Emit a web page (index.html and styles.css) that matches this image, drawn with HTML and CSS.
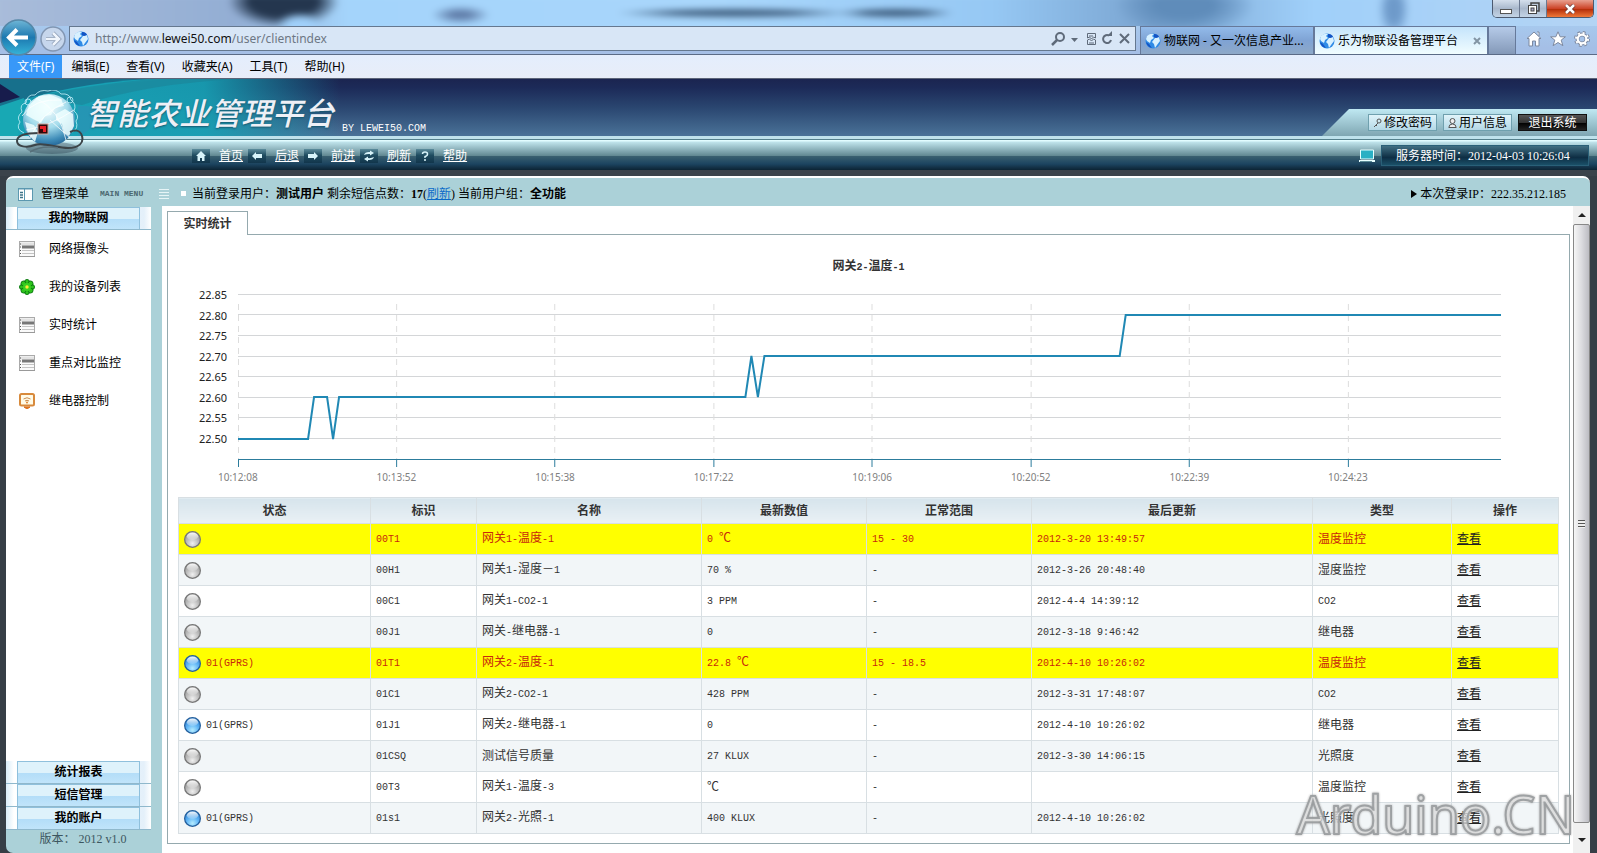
FILE: index.html
```html
<!DOCTYPE html>
<html lang="zh-CN">
<head>
<meta charset="utf-8">
<title>乐为物联设备管理平台</title>
<link rel="stylesheet" href="styles.css">
</head>
<body>
<svg class="defs" width="0" height="0" aria-hidden="true">
  <defs>
    <radialGradient id="gGray" cx="50%" cy="75%" r="75%"><stop offset="0" stop-color="#f0f0f0"/><stop offset=".5" stop-color="#bdbdbd"/><stop offset="1" stop-color="#8f8f8f"/></radialGradient>
    <radialGradient id="gBlue" cx="50%" cy="80%" r="75%"><stop offset="0" stop-color="#b4ecff"/><stop offset=".5" stop-color="#62b6f6"/><stop offset="1" stop-color="#2b7fd0"/></radialGradient>
    <linearGradient id="gShine" x1="0" y1="0" x2="0" y2="1"><stop offset="0" stop-color="#fff" stop-opacity=".95"/><stop offset="1" stop-color="#fff" stop-opacity=".15"/></linearGradient>
    <linearGradient id="gBack" x1="0" y1="0" x2="0" y2="1"><stop offset="0" stop-color="#6fb6d6"/><stop offset=".5" stop-color="#1c78b0"/><stop offset="1" stop-color="#36b4d8"/></linearGradient>
    <linearGradient id="gNav" x1="0" y1="0" x2="0" y2="1"><stop offset="0" stop-color="#5c8c9c"/><stop offset=".45" stop-color="#1f4c60"/><stop offset="1" stop-color="#12364c"/></linearGradient>
    <radialGradient id="gGlobe" cx="45%" cy="25%" r="80%"><stop offset="0" stop-color="#fff"/><stop offset=".5" stop-color="#a4dcec"/><stop offset=".8" stop-color="#3f8cb8"/><stop offset="1" stop-color="#1c5c90"/></radialGradient>
  </defs>
  <symbol id="earth" viewBox="0 0 16 16"><circle cx="8" cy="8" r="7.5" fill="#2f8be6"/><path d="M2 3Q5 0 9 1L7 3 9 5 6 7 5 10 2 8 1 6zM10 5l4-1 1 4-3 4-2 3-1-4-2-2z" fill="#d8f1ff"/><path d="M9 1q4 0 5 3l-3 1-2-1zM1 9l3 2 3 4q-5-1-6-6z" fill="#1454c4"/></symbol>
  <symbol id="orb-gray" viewBox="0 0 16 16"><circle cx="8" cy="8" r="7.4" fill="url(#gGray)" stroke="#777" stroke-width="1.2"/><ellipse cx="8" cy="5" rx="5.3" ry="3.5" fill="url(#gShine)"/></symbol>
  <symbol id="orb-blue" viewBox="0 0 16 16"><circle cx="8" cy="8" r="7.4" fill="url(#gBlue)" stroke="#245f9c" stroke-width="1.2"/><ellipse cx="8" cy="5" rx="5.3" ry="3.5" fill="url(#gShine)"/></symbol>
  <symbol id="list" viewBox="0 0 16 16"><rect x=".5" y=".5" width="15" height="15" fill="#fafafa" stroke="#aaa"/><path d="M1 3h14" stroke="#e2e2e2" stroke-width="3"/><path d="M3 6h12" stroke="#777" stroke-width="3"/><path d="M3 9.500h12M3 12.500h12" stroke="#c4c4c4"/><path d="M1 3h1M1 6h1M1 9.500h1M1 12.500h1" stroke="#555"/><path d="M0 15.500h16" stroke="#999"/></symbol>
</svg>

<div class="chrome">
  <div class="titlebar">
    <div class="glass"></div>
    <div class="winbtns">
      <button class="wb" aria-label="最小化"><svg width="14" height="12"><rect x="1.500" y="6.500" width="11" height="4" fill="#fff" stroke="#555"/></svg></button>
      <button class="wb" aria-label="还原"><svg width="13" height="13"><path d="M4 3V1h8v8h-2" fill="none" stroke="#444" stroke-width="1.500"/><rect x="1.500" y="3.500" width="8" height="8" fill="#fff" stroke="#444"/><rect x="4" y="6" width="3" height="3" fill="#aac" stroke="#444"/></svg></button>
      <button class="wb close" aria-label="关闭"><svg width="12" height="10"><path d="M2 1l8 8M10 1L2 9" stroke="#633" stroke-width="4"/><path d="M2 1l8 8M10 1L2 9" stroke="#fff" stroke-width="2.500"/></svg></button>
    </div>
  </div>
  <div class="addressrow">
    <button class="back" aria-label="返回"><svg width="37" height="37" viewBox="0 0 37 37"><circle cx="18.500" cy="18.500" r="17.500" fill="url(#gBack)" stroke="#5688a8" stroke-width="1.500"/><path d="M28 18.500H10M17 10.500l-8 8 8 8" fill="none" stroke="#fff" stroke-width="4"/></svg></button>
    <button class="fwd" aria-label="前进"><svg width="26" height="26" viewBox="0 0 26 26"><circle cx="13" cy="13" r="12" fill="#c6d6ec" stroke="#8296b2" stroke-width="1.500"/><path d="M6 13h12M13 7l6 6-6 6" fill="none" stroke="#8b9bb4" stroke-width="4"/><path d="M6 13h12M13 7l6 6-6 6" fill="none" stroke="#f0f5fc" stroke-width="2.500"/></svg></button>
    <div class="address">
      <svg width="16" height="16"><use href="#earth"/></svg>
      <span class="url">http://www.<span>lewei50.com</span>/user/clientindex</span>
      <svg width="80" height="16" viewBox="0 0 80 16" fill="none" stroke="#5f6b7a"><circle cx="9" cy="6" r="4" stroke-width="2"/><path d="M6 9l-5 5" stroke-width="2.500"/><path d="M20 7h7l-3.500 4z" fill="#5f6b7a" stroke="none"/><path d="M36.500 7V2.500h8V7l-2-1-2 2-2-2zM36.500 9v4.500h8V9l-2-1-2 2-2-2zM38 5h4M38 12h5" /><path d="M60 9a4 4 0 1 1-2-4.500" stroke-width="2"/><path d="M56 5h5V0z" fill="#5f6b7a" stroke="none"/><path d="M69 3l9 9M78 3l-9 9" stroke-width="2"/></svg>
    </div>
    <div class="tabs">
      <button class="tab"><svg width="16" height="16"><use href="#earth"/></svg><span>物联网 - 又一次信息产业...</span></button>
      <button class="tab on"><svg width="16" height="16"><use href="#earth"/></svg><span>乐为物联设备管理平台</span><svg class="x" width="8" height="8"><path d="M1 1l6 6M7 1L1 7" stroke="#8295a4" stroke-width="2"/></svg></button>
      <button class="newtab" aria-label="新标签"></button>
    </div>
    <div class="tools">
      <button aria-label="主页"><svg width="16" height="16" viewBox="0 0 16 16"><path d="M8 1l7 6.500h-2V15H9.500v-5h-3v5H3V7.500H1zM11 1h2v4" fill="#fff" stroke="#7d89a0"/></svg></button>
      <button aria-label="收藏"><svg width="16" height="16" viewBox="0 0 16 16"><path d="M8 .8l2.200 5h5.200l-4.200 3.300 1.700 5.600L8 11.500l-4.900 3.200 1.700-5.600L.6 5.800h5.200z" fill="#fff" stroke="#7d89a0"/></svg></button>
      <button aria-label="工具"><svg width="16" height="16" viewBox="0 0 16 16"><circle cx="8" cy="8" r="6.500" fill="none" stroke="#7d89a0" stroke-width="3" stroke-dasharray="2.600 2.500"/><circle cx="8" cy="8" r="4.500" fill="none" stroke="#7d89a0" stroke-width="4"/><circle cx="8" cy="8" r="6" fill="none" stroke="#fff" stroke-width="2" stroke-dasharray="2 2.700"/><circle cx="8" cy="8" r="4.300" fill="none" stroke="#fff" stroke-width="2.200"/></svg></button>
    </div>
  </div>
  <nav class="menubar">
    <button class="sel">文件(F)</button><button>编辑(E)</button><button>查看(V)</button><button>收藏夹(A)</button><button>工具(T)</button><button>帮助(H)</button>
  </nav>
</div>

<header class="banner">
  <svg class="art" width="340" height="57" viewBox="0 0 340 57" aria-hidden="true">
    <defs><linearGradient id="fade" x1="0" x2="1"><stop offset="0" stop-color="#17a3b6"/><stop offset=".6" stop-color="#17a3b6" stop-opacity=".9"/><stop offset="1" stop-color="#17a3b6" stop-opacity="0"/></linearGradient></defs>
    <path d="M0 0h170Q70 8 0 28z" fill="#17708c"/><path d="M0 5l20 13L0 24z" fill="#171c4c"/>
    <path d="M0 28Q70 4 150 0h190v57H0z" fill="url(#fade)"/>
    <path d="M82 26Q150 4 240 0h-90Q60 10 30 20z" fill="#1c8398" opacity=".6"/>
    <path d="M0 27L24 19 18 57H0z" fill="#18a8b4"/><path d="M80 57q40-26 6-30h-8v30z" fill="#2f8fb4" opacity=".6"/>
  </svg>
  <svg class="globe" width="68" height="66" viewBox="0 0 68 66" aria-hidden="true">
    <ellipse cx="36" cy="58" rx="26" ry="6" fill="#123" opacity=".3"/>
    <circle cx="33" cy="30" r="26" fill="url(#gGlobe)"/>
    <path d="M13 15l10-9 12-1 10 4 3 7-9 2-4 7-6 1-4 7-8-4-7-4zM40 24l9-5 8 5 1 12-5 10-5-3-2-9-6-4zM9 32l9 3 4 7-3 10-7-8z" fill="#f0ffff" opacity=".85"/>
    <path d="M6 26Q18 8 46 10M10 40Q34 36 58 20M20 8q24 12 30 42M14 48Q24 24 50 12M34 30l20 18" fill="none" stroke="#fff" stroke-opacity=".75"/>
    <g fill="none" stroke="#c4f0fa" stroke-opacity=".8"><path d="M6 22q-3-8 4-9 1-9 9-8 5-6 13-4 8-3 13 3 9-1 10 6 6 4 3 11"/><path d="M6 22q-6 5-2 10-5 7 4 11M58 21q6 5 2 10 3 8-4 11"/><circle cx="12" cy="12" r="3"/><circle cx="54" cy="10" r="3"/></g>
    <path d="M23 43C12 43 1 45 1 51s10 7 18 4 22 3 33 3 16-5 14-12-8-6-12-4" fill="none" stroke="#3c4448" stroke-width="2"/>
    <path d="M14 62q12-7 28-4" fill="none" stroke="#58707a" stroke-width="1.500"/>
    <rect x="22" y="34" width="10" height="10" fill="#300a0c" stroke="#c9a8a0" stroke-width="1"/><path d="M24 36h6v6h-3v-3h-3z" fill="#e82028"/>
  </svg>
  <div class="brand"><h1>智能农业管理平台</h1><span>BY LEWEI50.COM</span></div>
  <div class="account">
    <button><svg width="9" height="10" viewBox="0 0 9 10" fill="none" stroke="#555"><circle cx="6" cy="3" r="2"/><path d="M5 5L1 9M3 7l1 1"/></svg>修改密码</button>
    <button><svg width="9" height="10" viewBox="0 0 9 10" fill="#eee" stroke="#555"><circle cx="4.500" cy="3" r="2.500"/><path d="M.8 9.500Q1 6 4.500 6t3.700 3.500z"/></svg>用户信息</button>
    <button class="exit">退出系统</button>
  </div>
</header>
<div class="navbar">
  <nav class="links">
    <a href="#"><svg viewBox="0 0 18 14"><rect width="18" height="14" fill="url(#gNav)"/><path d="M9 2l5 5h-1.500v5H10V9H8v3H5.500V7H4z" fill="#d8f4fa"/></svg><span>首页</span></a>
    <a href="#"><svg viewBox="0 0 18 14"><rect width="18" height="14" fill="url(#gNav)"/><path d="M4 7l4-4v2h6v4H8v2z" fill="#d8f4fa"/></svg><span>后退</span></a>
    <a href="#"><svg viewBox="0 0 18 14"><rect width="18" height="14" fill="url(#gNav)"/><path d="M14 7l-4-4v2H4v4h6v2z" fill="#d8f4fa"/></svg><span>前进</span></a>
    <a href="#"><svg viewBox="0 0 18 14"><rect width="18" height="14" fill="url(#gNav)"/><path d="M4 6q1-3.500 6-3V1.500L14 4l-4 2.500V5Q7 4.500 4 6zM14 8q-1 3.500-6 3v1.500L4 10l4-2.500V9q3 .5 6-1z" fill="#d8f4fa"/></svg><span>刷新</span></a>
    <a href="#"><svg viewBox="0 0 18 14"><rect width="18" height="14" fill="url(#gNav)"/><path d="M6.500 5q0-2 2.500-2t2.500 2T9 7.500V9M9 10v2" fill="none" stroke="#d8f4fa" stroke-width="1.500"/></svg><span>帮助</span></a>
  </nav>
  <svg width="16" height="14" viewBox="0 0 16 14"><path d="M1.500 1h13v9h-13z" fill="#2ab0c4" stroke="#e8ffff"/><path d="M0 12h16" stroke="#e8ffff" stroke-width="2"/><path d="M1 12.500h12" stroke="#5c8c98"/></svg>
  <div class="clock">服务器时间：2012-04-03 10:26:04</div>
</div>

<main class="shell">
  <div class="infobar">
    <div class="menuhead">
      <svg width="15" height="13" viewBox="0 0 15 13"><rect x=".5" y=".5" width="14" height="12" fill="#fff" stroke="#5c98b0"/><path d="M0 1h15M6.500 1v12" stroke="#5c98b0"/><path d="M2 4.500h3M2 7h3M2 9.500h3" stroke="#3e7388" stroke-width="1.500"/></svg>
      <span>管理菜单</span><small>MAIN MENU</small>
      <svg class="lines" width="10" height="12"><path d="M0 1.500h10M0 4.500h10M0 7.500h10M0 10.500h10" stroke="#e6f4f6"/></svg>
    </div>
    <p class="who"><i></i>当前登录用户：<b>测试用户</b> 剩余短信点数：<b>17</b>(<a href="#">刷新</a>) 当前用户组：<b>全功能</b></p>
    <p class="ip"><svg width="6" height="8"><path d="M0 0l6 4-6 4z"/></svg>本次登录IP：222.35.212.185</p>
  </div>
  <div class="body">
    <aside class="side">
      <button class="group"><span>我的物联网</span></button>
      <ul>
        <li><a href="#"><svg width="16" height="16"><use href="#list"/></svg>网络摄像头</a></li>
        <li><a href="#"><svg width="16" height="16" viewBox="0 0 16 16"><g fill="#2fc41c" stroke="#0a7a10"><circle cx="8" cy="3" r="2.500"/><circle cx="8" cy="13" r="2.500"/><circle cx="3" cy="8" r="2.500"/><circle cx="13" cy="8" r="2.500"/><circle cx="4.500" cy="4.500" r="2.500"/><circle cx="11.500" cy="4.500" r="2.500"/><circle cx="4.500" cy="11.500" r="2.500"/><circle cx="11.500" cy="11.500" r="2.500"/></g><circle cx="8" cy="8" r="4" fill="#38d020"/><circle cx="8" cy="8" r="1.700" fill="#ffe838"/></svg>我的设备列表</a></li>
        <li><a href="#"><svg width="16" height="16"><use href="#list"/></svg>实时统计</a></li>
        <li><a href="#"><svg width="16" height="16"><use href="#list"/></svg>重点对比监控</a></li>
        <li><a href="#"><svg width="16" height="16" viewBox="0 0 16 16"><rect x="1" y="1" width="14" height="11.500" rx="1.500" fill="#fffbe8" stroke="#d88a3c" stroke-width="2"/><path d="M4.500 6q3.500-2.500 7 0M6 8q2-1.500 4 0" fill="none" stroke="#c98b50"/><circle cx="8" cy="9.500" r=".9" fill="#d87820"/><path d="M5 14h6l-3 2z" fill="#e87818" stroke="#d87020"/></svg>继电器控制</a></li>
      </ul>
      <button class="group"><span>统计报表</span></button>
      <button class="group"><span>短信管理</span></button>
      <button class="group"><span>我的账户</span></button>
      <p class="version">版本： 2012 v1.0</p>
    </aside>
    <section class="content">
      <div class="pagetab"><button>实时统计</button></div>
      <div class="panel">
        <h2>网关<span class="n">2-</span>温度<span class="n">-1</span></h2>
        <div class="chart">
          <div class="yaxis"><span>22.85</span><span>22.80</span><span>22.75</span><span>22.70</span><span>22.65</span><span>22.60</span><span>22.55</span><span>22.50</span></div>
          <div class="plot">
            <svg viewBox="0 0 1262 176" preserveAspectRatio="none" fill="none" role="img" aria-label="温度曲线">
              <path class="grid" d="M0 2.500H1262M0 22.500H1262M0 43.500H1262M0 64.500H1262M0 84.500H1262M0 105.500H1262M0 125.500H1262M0 146.500H1262"/>
              <path class="dash" d="M.5 12V167M158.500 12V167M316.500 12V167M475.500 12V167M633.500 12V167M792.500 12V167M950.500 12V167M1109.500 12V167"/>
              <path class="axis" d="M0 167.500H1262M.5 167V175M158.500 167V175M316.500 167V175M475.500 167V175M633.500 167V175M792.500 167V175M950.500 167V175M1109.500 167V175"/>
              <path class="series" d="M0 147H70L76 105H89L95 147 101 105H507L513 64 519.500 105 526 64H881L887 23H1262"/>
            </svg>
            <div class="xaxis"><span>10:12:08</span><span>10:13:52</span><span>10:15:38</span><span>10:17:22</span><span>10:19:06</span><span>10:20:52</span><span>10:22:39</span><span>10:24:23</span></div>
          </div>
        </div>
        <table>
          <colgroup><col class="c1"><col class="c2"><col class="c3"><col class="c4"><col class="c4"><col class="c6"><col class="c7"><col class="c8"></colgroup>
          <thead><tr><th>状态</th><th>标识</th><th>名称</th><th>最新数值</th><th>正常范围</th><th>最后更新</th><th>类型</th><th>操作</th></tr></thead>
          <tbody>
            <tr class="warn"><td><svg><use href="#orb-gray"/></svg></td><td><span class="n">00T1</span></td><td>网关<span class="n">1-</span>温度<span class="n">-1</span></td><td><span class="n">0 </span>℃</td><td><span class="n">15 - 30</span></td><td><span class="n">2012-3-20 13:49:57</span></td><td>温度监控</td><td><a href="#">查看</a></td></tr>
            <tr><td><svg><use href="#orb-gray"/></svg></td><td><span class="n">00H1</span></td><td>网关<span class="n">1-</span>湿度－<span class="n">1</span></td><td><span class="n">70 %</span></td><td><span class="n">-</span></td><td><span class="n">2012-3-26 20:48:40</span></td><td>湿度监控</td><td><a href="#">查看</a></td></tr>
            <tr><td><svg><use href="#orb-gray"/></svg></td><td><span class="n">00C1</span></td><td>网关<span class="n">1-CO2-1</span></td><td><span class="n">3 PPM</span></td><td><span class="n">-</span></td><td><span class="n">2012-4-4 14:39:12</span></td><td><span class="n">CO2</span></td><td><a href="#">查看</a></td></tr>
            <tr><td><svg><use href="#orb-gray"/></svg></td><td><span class="n">00J1</span></td><td>网关<span class="n">-</span>继电器<span class="n">-1</span></td><td><span class="n">0</span></td><td><span class="n">-</span></td><td><span class="n">2012-3-18 9:46:42</span></td><td>继电器</td><td><a href="#">查看</a></td></tr>
            <tr class="warn"><td><svg><use href="#orb-blue"/></svg><span class="n">01(GPRS)</span></td><td><span class="n">01T1</span></td><td>网关<span class="n">2-</span>温度<span class="n">-1</span></td><td><span class="n">22.8 </span>℃</td><td><span class="n">15 - 18.5</span></td><td><span class="n">2012-4-10 10:26:02</span></td><td>温度监控</td><td><a href="#">查看</a></td></tr>
            <tr><td><svg><use href="#orb-gray"/></svg></td><td><span class="n">01C1</span></td><td>网关<span class="n">2-CO2-1</span></td><td><span class="n">428 PPM</span></td><td><span class="n">-</span></td><td><span class="n">2012-3-31 17:48:07</span></td><td><span class="n">CO2</span></td><td><a href="#">查看</a></td></tr>
            <tr><td><svg><use href="#orb-blue"/></svg><span class="n">01(GPRS)</span></td><td><span class="n">01J1</span></td><td>网关<span class="n">2-</span>继电器<span class="n">-1</span></td><td><span class="n">0</span></td><td><span class="n">-</span></td><td><span class="n">2012-4-10 10:26:02</span></td><td>继电器</td><td><a href="#">查看</a></td></tr>
            <tr><td><svg><use href="#orb-gray"/></svg></td><td><span class="n">01CSQ</span></td><td>测试信号质量</td><td><span class="n">27 KLUX</span></td><td><span class="n">-</span></td><td><span class="n">2012-3-30 14:06:15</span></td><td>光照度</td><td><a href="#">查看</a></td></tr>
            <tr><td><svg><use href="#orb-gray"/></svg></td><td><span class="n">00T3</span></td><td>网关<span class="n">1-</span>温度<span class="n">-3</span></td><td>℃</td><td><span class="n">-</span></td><td></td><td>温度监控</td><td><a href="#">查看</a></td></tr>
            <tr><td><svg><use href="#orb-blue"/></svg><span class="n">01(GPRS)</span></td><td><span class="n">01s1</span></td><td>网关<span class="n">2-</span>光照<span class="n">-1</span></td><td><span class="n">400 KLUX</span></td><td><span class="n">-</span></td><td><span class="n">2012-4-10 10:26:02</span></td><td>光照度</td><td><a href="#">查看</a></td></tr>
          </tbody>
        </table>
      </div>
    </section>
    <div class="scroll" aria-hidden="true">
      <svg width="17" height="18"><path d="M5 11l4-4 4 4z" fill="#222"/></svg>
      <div class="thumb"><i></i></div>
      <svg width="17" height="30"><path d="M5 15l4 4 4-4z" fill="#222"/></svg>
    </div>
  </div>
  <div class="watermark">Arduino.CN</div>
</main>
</body>
</html>
```
FILE: styles.css
```css
* { box-sizing: border-box; }
body {
  margin: 0;
  min-height: 100vh;
  display: flex;
  flex-direction: column;
  background: #363e46;
  font: 12px/16px "Liberation Serif", "Noto Sans CJK SC", serif;
  color: #000;
}
button { font: inherit; color: inherit; border: 0; padding: 0; margin: 0; background: none; cursor: pointer; }
p, h1, h2, ul { margin: 0; padding: 0; list-style: none; }
svg { display: block; flex: none; }
.defs { position: absolute; }
.n { font-family: "Liberation Mono", monospace; font-size: 10px; white-space: pre; }

/* browser frame */
.chrome { font-family: "Noto Sans", "Noto Sans CJK SC", sans-serif; background: linear-gradient(#a9d4f6, #a5bfe6 60%); }
.titlebar { height: 26px; position: relative; overflow: hidden; display: flex; justify-content: flex-end; }
.glass {
  position: absolute;
  inset: -6px;
  filter: blur(3px);
  background:
    radial-gradient(ellipse 24px 12px at 19% 80%, #a0d0fa 50%, transparent),
    radial-gradient(ellipse 56px 26px at 18% 20%, #24364e 60%, transparent),
    radial-gradient(ellipse 30px 9px at 29% 55%, #5f7ca8 30%, transparent),
    radial-gradient(ellipse 120px 5px at 46% 50%, #3f5f80 50%, transparent),
    radial-gradient(ellipse 60px 5px at 56% 50%, #3f5f80 50%, transparent),
    radial-gradient(ellipse 70px 30px at 74% 30%, #5f8cba 40%, transparent),
    radial-gradient(ellipse 16px 30px at 87% 40%, #6e9aca 40%, transparent),
    linear-gradient(90deg, #a9bcda, #93aed4 15%, #a4d4fb 22%, #a9d6fb 45%, #96c8f4 62%, #7aa4d0 72%, #a0d0fa 82%, #b4d4f4);
}
.winbtns { position: relative; display: flex; height: 18px; margin-right: 3px; border: 1px solid #4c5a70; border-top: 0; border-radius: 0 0 5px 5px; overflow: hidden; }
.wb { width: 27px; display: grid; place-items: center; background: linear-gradient(#d4dfec, #a9b8cc 50%, #c3d4e6); border-right: 1px solid #6a7890; }
.wb.close { width: 46px; border: 0; background: linear-gradient(#e8a090, #cc4428 50%, #b02a08 52%, #f07838); }
.addressrow { display: flex; align-items: flex-start; height: 29px; border-bottom: 1px solid #5b6b86; padding-right: 7px; }
.back { height: 28px; align-self: flex-end; display: flex; align-items: center; z-index: 1; }
.back svg { margin-bottom: 6px; }
.fwd { margin: 0 3px; }
.address {
  flex: 1;
  height: 25px;
  display: flex;
  align-items: center;
  gap: 6px;
  padding: 0 4px 0 3px;
  border: 1px solid #65788f;
  background: #d8e6f6;
}
.url { flex: 1; color: #6d7784; }
.url span { color: #111; }
.tabs { display: flex; margin-left: 4px; height: 28px; }
.tab { width: 174px; display: flex; align-items: center; gap: 3px; padding: 0 6px 0 4px; border: 1px solid #66799a; border-bottom: 0; background: linear-gradient(#93bbea, #7fa3d4 50%, #8ea9c8); white-space: nowrap; text-align: left; }
.tab span { flex: 1; }
.tab.on { background: linear-gradient(#c5e4fb, #f1fdff); }
.newtab { width: 28px; border: 1px solid #66799a; border-bottom: 0; background: linear-gradient(#b5cae8, #8499b8); }
.tools { display: flex; gap: 8px; margin: 5px 0 0 10px; }
.menubar { display: flex; gap: 1px; height: 24px; padding-left: 9px; background: linear-gradient(#e4eefd, #e8edf8); border-bottom: 1px solid #5c6478; }
.menubar button { padding: 0 8px; height: 23px; line-height: 23px; }
.menubar .sel { background: #3898f8; color: #fff; }

/* banner */
.banner { position: relative; height: 57px; display: flex; background: linear-gradient(#1b2550, #1c2a58 15%, #2a4670 50%, #4a7298); }
.art { position: absolute; left: 0; top: 0; }
.globe { position: absolute; left: 16px; top: 11px; z-index: 2; }
.brand { position: relative; flex: 1; display: flex; align-items: flex-end; gap: 8px; padding-left: 86px; color: #fff; }
.brand h1 { font: italic 500 31px/40px "Noto Sans CJK SC", sans-serif; color: #eef0f6; text-shadow: 0 1px 2px #14566e; padding-bottom: 4px; }
.brand span { font: 10px/14px "Liberation Mono", monospace; }
.account { align-self: flex-end; display: flex; gap: 6px; padding: 5px 10px 5px 46px; height: 27px; background: linear-gradient(#bfe8f2, #7fa6b2); clip-path: polygon(27px 0, 100% 0, 100% 100%, 0 100%); }
.account button { width: 69px; display: flex; align-items: center; justify-content: center; gap: 2px; line-height: 16px; border: 1px solid #6fa0ae; background: linear-gradient(#e0f4fa, #b4d8e6); }
.account .exit { background: linear-gradient(#555, #333 50%, #000 52%, #222); border-color: #111; color: #fff; }
.navbar {
  height: 40px;
  padding: 0 8px 0 192px;
  display: flex;
  align-items: center;
  color: #fff;
  border-bottom: 6px solid #3b434b;
  background: linear-gradient(#bfe2ec 0 3px, #54808c 3px 4px, #e2fcff 4px 5px, #c0e4ec 6px, #5f8690 20px, #3a6070 20px, #1c4460 28px, #0c2434 34px);
}
.links { flex: 1; display: flex; gap: 5px; padding-top: 5px; }
.links a { display: flex; align-items: center; gap: 9px; color: #fff; }
.links svg { width: 18px; height: 14px; }
.navbar > svg { margin: 5px 6px 0 0; }
.clock { width: 208px; margin-top: 5px; padding: 0 14px; line-height: 20px; height: 21px; border: 1px solid #2a6078; background: linear-gradient(#416f82, #0e2e44 60%, #1a5068); white-space: nowrap; }

/* work area */
.shell { position: relative; flex: 1; display: flex; flex-direction: column; margin: 0 7px 0 6px; background: #abd1d8; border-top: 2px solid #fff; border-radius: 7px 7px 0 7px; }
.infobar { display: flex; align-items: center; height: 28px; padding: 4px 24px 0 12px; }
.menuhead { width: 163px; display: flex; align-items: center; gap: 8px; }
.menuhead small { flex: 1; font: 8px/10px "Liberation Mono", monospace; font-weight: bold; color: #4c6870; white-space: nowrap; padding-left: 3px; }
.menuhead .lines { margin-right: 12px; }
.who { flex: 1; display: block; }
.who i { display: inline-block; width: 5px; height: 5px; margin-right: 6px; background: #fff; vertical-align: 2px; }
.who a { color: #0a6ac8; }
.ip { display: flex; align-items: center; gap: 3px; }
.body { flex: 1; display: flex; }
.side { width: 147px; padding-top: 1px; display: flex; flex-direction: column; }
.side ul { flex: 1; background: #fff; }
.side li { height: 38px; }
.side li a { display: flex; align-items: center; gap: 14px; height: 38px; padding-left: 13px; color: #000; text-decoration: none; }
.group { height: 23px; padding: 0 11px; font-weight: bold; background: linear-gradient(90deg, #d8ecf8, #fff 8px, #e4f0fa 138px, #fff); border-bottom: 1px solid #8fb8cc; }
.group span { display: block; height: 22px; line-height: 21px; border: 1px solid #8fc0dc; border-bottom: 0; background: linear-gradient(#def2fb 0 50%, #b3ddf8 52%, #c0e4fa); }
.version { height: 23px; line-height: 18px; padding-left: 9px; text-align: center; color: #3c5660; }
.content { flex: 1; margin-left: 11px; padding: 5px 3px 9px 5px; background: #fff; display: flex; flex-direction: column; }
.pagetab { height: 24px; margin-bottom: -1px; z-index: 1; }
.pagetab button { width: 81px; height: 24px; border: 1px solid #95a9ae; border-bottom: 0; background: #fff; font-weight: bold; color: #333; }
.panel { flex: 1; border: 1px solid #95a9ae; padding: 22px 10px 0; }
.panel h2 { font-size: 12px; line-height: 18px; text-align: center; color: #333; }
.chart { display: flex; padding: 10px 58px 0 20px; height: 220px; color: #222; font-family: "Noto Sans", sans-serif; }
.yaxis { display: flex; flex-direction: column; justify-content: space-between; height: 160px; width: 40px; font-size: 11px; line-height: 16px; padding-right: 11px; align-items: flex-end; }
.plot { flex: 1; min-width: 0; }
.plot svg { width: 100%; height: 176px; margin-top: 5px; }
.plot path { vector-effect: non-scaling-stroke; }
.grid { stroke: #d4d6d8; }
.dash { stroke: #ddd; stroke-dasharray: 6 5; }
.axis { stroke: #2c7c9c; }
.series { stroke: #2088b4; stroke-width: 2; }
.xaxis { display: flex; margin: 1px 0 0 -20px; font-size: 10px; line-height: 16px; color: #808080; }
.xaxis span { flex: 0 0 12.36%; }
table { width: 100%; border-collapse: collapse; table-layout: fixed; color: #333; }
.c1 { width: 192px; } .c2 { width: 106px; } .c3 { width: 225px; } .c4 { width: 165px; }
.c6 { width: 281px; } .c7 { width: 139px; } .c8 { width: 107px; }
th, td { border: 1px solid #d8dfe3; padding: 0 5px; }
th { height: 26px; background: linear-gradient(#d6e4ec, #eaf1f5); }
td { height: 31px; line-height: 18px; }
td svg { display: inline-block; width: 17px; height: 17px; margin-right: 5px; vertical-align: middle; }
td a { color: #222; }
tbody tr:nth-child(even) { background: #f2f6f8; }
tbody tr.warn { background: #ff0; color: #c8280c; }
.scroll { width: 17px; display: flex; flex-direction: column; background: #f0f0f0; }
.thumb { flex: 1; display: grid; place-items: center; border: 1px solid #888; border-radius: 2px; background: linear-gradient(90deg, #f6f6f6, #dcdce0 50%, #bcbcc2); }
.thumb i { width: 7px; height: 8px; background: repeating-linear-gradient(#555 0 1px, #eee 1px 3px); }
.watermark {
  position: absolute;
  right: 15px;
  bottom: 7px;
  font: 52px/64px "Noto Sans", sans-serif;
  color: rgba(255, 255, 255, .5);
  -webkit-text-stroke: 2px rgba(150, 154, 156, .85);
  filter: drop-shadow(0 0 1px #999);
  pointer-events: none;
}
```
